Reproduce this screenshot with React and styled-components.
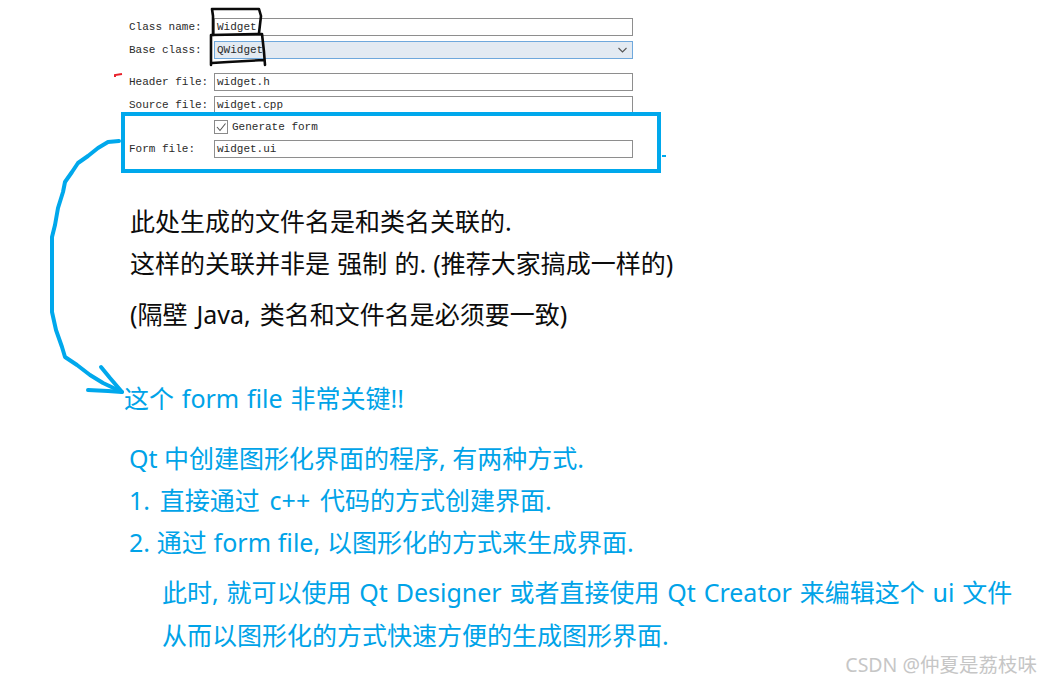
import React from "react";
import styled, { createGlobalStyle } from "styled-components";

const Global = createGlobalStyle`
  html, body { margin: 0; padding: 0; background: #fff; }
  body { font-family: "Noto Sans", "Noto Sans CJK SC", sans-serif; }
`;

const Page = styled.div`
  position: relative;
  width: 1040px;
  height: 683px;
  overflow: hidden;
  background: #fff;
`;

const Form = styled.div`
  position: absolute;
  left: 129px;
  top: 18px;
  width: 504px;
  display: flex;
  flex-direction: column;
`;

const Row = styled.div`
  display: grid;
  grid-template-columns: 85px 419px;
  align-items: center;
  height: ${(p) => p.$h || 17}px;
  margin-top: ${(p) => p.$gap || 0}px;
`;

const Label = styled.span`
  font: 11px/17px "Liberation Mono", monospace;
  color: #2a2a2a;
  white-space: pre;
  padding-top: ${(p) => p.$drop || 0}px;
`;

const Field = styled.div`
  box-sizing: border-box;
  height: 18px;
  display: flex;
  align-items: center;
  justify-content: space-between;
  padding: 0 5px 0 2px;
  font: 11px/16px "Liberation Mono", monospace;
  color: #2a2a2a;
  background: ${(p) => (p.$active ? "#e3eaf2" : "#fff")};
  border: 1px solid ${(p) => (p.$active ? "#6fa8dc" : "#8e8e8e")};
`;

const Check = styled.div`
  display: flex;
  align-items: center;
  gap: 4px;
  font: 11px/14px "Liberation Mono", monospace;
  color: #2a2a2a;
`;

const Box = styled.span`
  box-sizing: border-box;
  width: 14px;
  height: 14px;
  border: 1px solid #8a8a8a;
  display: inline-flex;
  align-items: center;
  justify-content: center;
`;

const Highlight = styled.div`
  position: absolute;
  left: 121px;
  top: 112px;
  width: 540px;
  height: 61px;
  box-sizing: border-box;
  border: 4px solid #00a8ec;
  pointer-events: none;
`;

const Ink = styled.svg`
  position: absolute;
  left: 0;
  top: 0;
  width: 1040px;
  height: 683px;
  pointer-events: none;
`;

const Notes = styled.div`
  position: absolute;
  left: 0;
  top: 0;
  width: 1040px;
  font-size: 25px;
`;

const Line = styled.div`
  position: absolute;
  left: ${(p) => p.$x}px;
  top: ${(p) => p.$y}px;
  line-height: 36px;
  white-space: nowrap;
  word-spacing: ${(p) => p.$ws || 0}px;
  color: ${(p) => (p.$blue ? "#00a3e8" : "#0c0c0c")};
`;

const Watermark = styled.div`
  position: absolute;
  right: 3px;
  top: 651px;
  font: 19.5px/28px "Noto Sans", "Noto Sans CJK SC", sans-serif;
  color: #c6c6c6;
  white-space: nowrap;
`;

const black = [
  "M213 35 L213 16 L212 9 L228 9 L259 9 L261 16 L259 33",
  "M211 65 L211 35 L262 34 L264 52 L265 65 M212 63 L228 62 L264 60",
];

export default function App() {
  return (
    <Page>
      <Global />
      <Form>
        <Row>
          <Label>Class name:</Label>
          <Field>Widget</Field>
        </Row>
        <Row $gap={6}>
          <Label $drop={1}>Base class:</Label>
          <Field $active>
            <span>QWidget</span>
            <svg width="9" height="6" viewBox="0 0 9 6">
              <path d="M0.5 1 L4.5 5 L8.5 1" fill="none" stroke="#555" strokeWidth="1.1" />
            </svg>
          </Field>
        </Row>
        <Row $gap={15}>
          <Label $drop={1}>Header file:</Label>
          <Field>widget.h</Field>
        </Row>
        <Row $gap={6}>
          <Label>Source file:</Label>
          <Field>widget.cpp</Field>
        </Row>
        <Row $h={14} $gap={7}>
          <span />
          <Check>
            <Box>
              <svg width="10" height="10" viewBox="0 0 10 10">
                <path d="M1 5 L4 8.5 L9.5 1.5" fill="none" stroke="#555" strokeWidth="1.1" />
              </svg>
            </Box>
            Generate form
          </Check>
        </Row>
        <Row $gap={6}>
          <Label>Form file:</Label>
          <Field>widget.ui</Field>
        </Row>
      </Form>

      <Highlight />

      <Ink viewBox="0 0 1040 683">
        {black.map((d) => (
          <path key={d} d={d} fill="none" stroke="#0a0a0a" strokeWidth="2.6" strokeLinejoin="round" strokeLinecap="round" />
        ))}
        <path d="M115 77 L115 75 L122 74" fill="none" stroke="#e8202a" strokeWidth="2" />
        <path d="M662 156 L666 156" fill="none" stroke="#00a8ec" strokeWidth="2" />
        <path
          d="M119 141 L108 142 L98 148 L88 156 L78 163 L72 172 L65 182 L63 192 L58 208 L55 225 L52 237 L52 263 L52 312 L56 330 L62 347 L65 357 L77 365 L90 375 L103 383 L122 392"
          fill="none"
          stroke="#00a8ec"
          strokeWidth="4"
          strokeLinejoin="round"
          strokeLinecap="round"
        />
        <path
          d="M101 367 L110 378 L122 392 L108 391 L88 390"
          fill="none"
          stroke="#00a8ec"
          strokeWidth="4"
          strokeLinejoin="round"
          strokeLinecap="round"
        />
      </Ink>

      <Notes>
        <Line $x={130} $y={203}>此处生成的文件名是和类名关联的.</Line>
        <Line $x={130} $y={245} $ws={0.7}>这样的关联并非是 强制 的. (推荐大家搞成一样的)</Line>
        <Line $x={130} $y={296} $ws={2.5}>(隔壁 Java, 类名和文件名是必须要一致)</Line>
        <Line $blue $x={124} $y={380} $ws={1.3}>这个 form file 非常关键!!</Line>
        <Line $blue $x={129} $y={440}>Qt 中创建图形化界面的程序, 有两种方式.</Line>
        <Line $blue $x={129} $y={482} $ws={3.3}>1. 直接通过 c++ 代码的方式创建界面.</Line>
        <Line $blue $x={129} $y={524} $ws={0.3}>2. 通过 form file, 以图形化的方式来生成界面.</Line>
        <Line $blue $x={162} $y={574} $ws={1.3}>此时, 就可以使用 Qt Designer 或者直接使用 Qt Creator 来编辑这个 ui 文件</Line>
        <Line $blue $x={162} $y={617}>从而以图形化的方式快速方便的生成图形界面.</Line>
      </Notes>

      <Watermark>CSDN @仲夏是荔枝味</Watermark>
    </Page>
  );
}
